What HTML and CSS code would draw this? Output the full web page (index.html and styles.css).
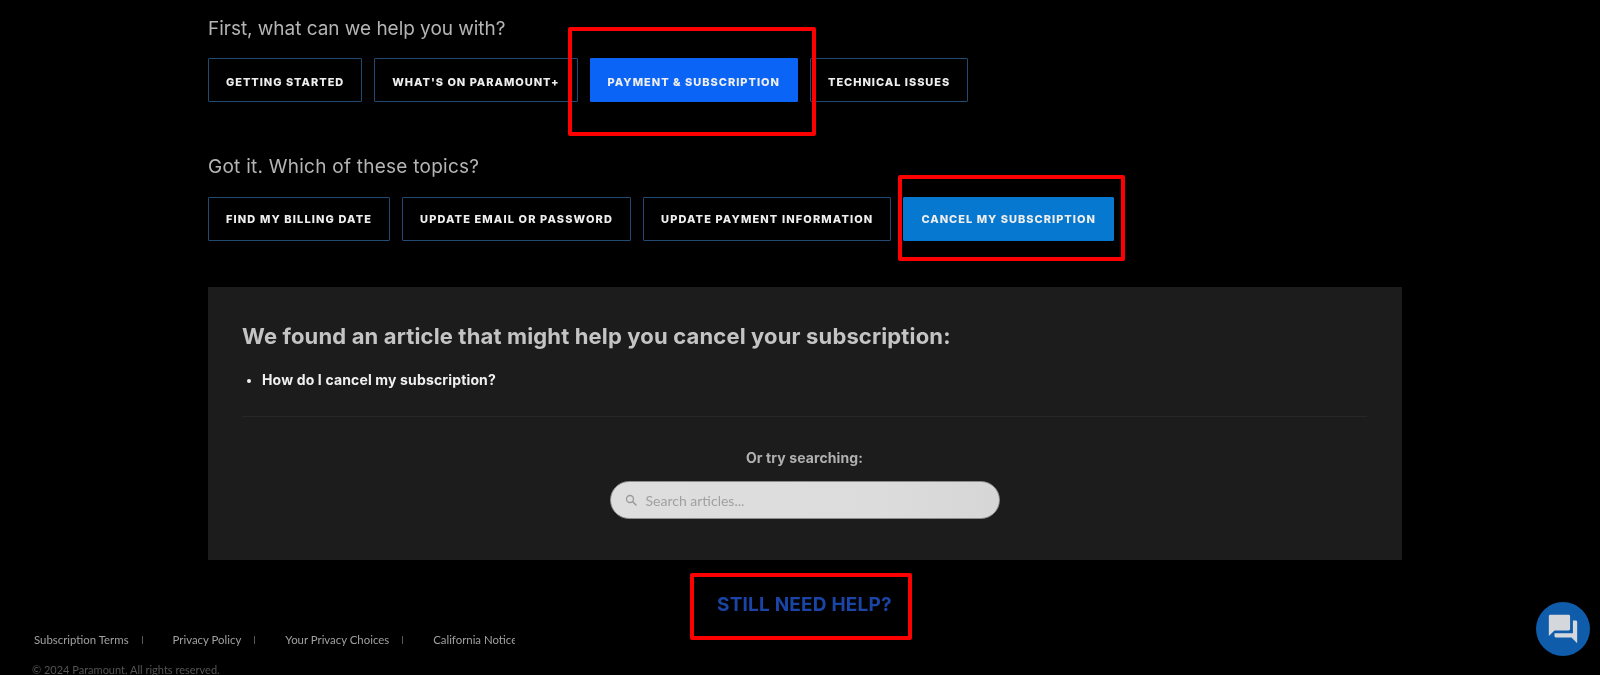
FILE: index.html
```html
<!DOCTYPE html>
<html lang="en">
<head>
<meta charset="utf-8">
<title>Paramount+ Help</title>
<link rel="stylesheet" href="styles.css">
</head>
<body>
<main class="help">
  <h2 class="prompt">First, what can we help you with?</h2>
  <div class="choices choices-first">
    <a class="choice">GETTING STARTED</a>
    <a class="choice">WHAT'S ON PARAMOUNT+</a>
    <a class="choice choice-active">PAYMENT &amp; SUBSCRIPTION</a>
    <a class="choice">TECHNICAL ISSUES</a>
  </div>
  <h2 class="prompt prompt-second">Got it. Which of these topics?</h2>
  <div class="choices choices-second">
    <a class="choice">FIND MY BILLING DATE</a>
    <a class="choice">UPDATE EMAIL OR PASSWORD</a>
    <a class="choice">UPDATE PAYMENT INFORMATION</a>
    <a class="choice choice-current">CANCEL MY SUBSCRIPTION</a>
  </div>
  <section class="panel">
    <h3 class="panel-title">We found an article that might help you cancel your subscription:</h3>
    <ul class="articles">
      <li>How do I cancel my subscription?</li>
    </ul>
    <hr class="rule">
    <p class="try">Or try searching:</p>
    <div class="search">
      <svg class="search-icon" viewBox="0 0 24 24" width="12" height="12" aria-hidden="true"><circle cx="10" cy="10" r="7" fill="none" stroke="currentColor" stroke-width="2.6"/><path d="M15 15l7 7" stroke="currentColor" stroke-width="3" stroke-linecap="round"/></svg>
      <span>Search articles...</span>
    </div>
  </section>
  <a class="still">STILL NEED HELP?</a>
</main>
<footer class="foot">
  <nav class="foot-links">
    <a>Subscription Terms</a><i></i>
    <a>Privacy Policy</a><i></i>
    <a>Your Privacy Choices</a><i></i>
    <a>California Notice</a>
  </nav>
  <p class="copy">© 2024 Paramount. All rights reserved.</p>
</footer>
<div class="mark mark-one"></div>
<div class="mark mark-two"></div>
<div class="mark mark-three"></div>
<button class="chat" aria-label="Chat">
  <svg viewBox="0 0 24 24" width="34" height="34" aria-hidden="true"><path fill="currentColor" d="M21 6h-2v9H6v2c0 .55.45 1 1 1h11l4 4V7c0-.55-.45-1-1-1zm-4 6V3c0-.55-.45-1-1-1H3c-.55 0-1 .45-1 1v14l4-4h10c.55 0 1-.45 1-1z"/></svg>
</button>
</body>
</html>
```

FILE: styles.css
```css
* { box-sizing: border-box; }
html, body { margin: 0; height: 675px; overflow: hidden; background: #000; }
body { position: relative; font-family: Inter, "Liberation Sans", sans-serif; color: #fff; filter: blur(0.45px); }

.help { width: 1194px; margin-left: 208px; padding-top: 15px; }

.prompt { margin: 0 0 15px; font-size: 19px; line-height: 28px; font-weight: 400; letter-spacing: -0.03px; color: #b4b4b4; }
.prompt-second { margin: 51px 0 16px; letter-spacing: 0.25px; }

.choices { display: flex; gap: 12px; }
.choice {
  height: 44px; padding: 0 17px; display: flex; align-items: center;
  border: 1px solid #234a72; border-radius: 1px; color: #eee;
  font-family: Inter, sans-serif; font-size: 11px; font-weight: 800; white-space: nowrap;
}
.choices-first .choice { padding-top: 3px; letter-spacing: 0.97px; }
.choices-first .choice-active { letter-spacing: 1px; }
.choices-second .choice { letter-spacing: 1.12px; }
.choices-second .choice-current { letter-spacing: 1px; }
.choice-active { background: #0a64f5; border-color: #0a64f5; }
.choice-current { background: #0678cf; border-color: #0678cf; }

.panel { margin-top: 46px; height: 273px; padding: 34px 35px 0 34px; background: #1c1c1c; }
.panel-title { margin: 0; font-size: 22px; line-height: 30px; font-weight: 700; letter-spacing: 0.15px; color: #c4c4c4; }
.articles { margin: 19px 0 0; padding: 0 0 0 20px; font-size: 14px; line-height: 20px; font-weight: 700; letter-spacing: 0.15px; color: #f0f0f0; }
.articles li::marker { font-size: 13px; }
.rule { margin: 26px 0 0; border: 0; height: 1px; background: #272727; }
.try { margin: 32px 0 14px; text-align: center; font-size: 14px; line-height: 18px; font-weight: 700; letter-spacing: 0.1px; color: #b0b0b0; }
.search {
  width: 390px; height: 38px; margin: 0 auto; padding: 0 14px; display: flex; align-items: center; gap: 9px;
  border: 1px solid #8c8c8c; border-radius: 19px; background: linear-gradient(90deg, #dedede, #dcdcdc 70%, #d6d6d6);
  font-family: Lato, sans-serif; font-size: 14px; color: #a0a0a0;
}
.search-icon { color: #999; }

.still { display: block; margin-top: 33px; padding-left: 509px; font-size: 19px; line-height: 24px; font-weight: 700; letter-spacing: 0.2px; color: #1a45a6; }

.foot { padding: 15px 0 0 34px; font-family: Lato, sans-serif; }
.foot-links { width: 481px; height: 16px; display: flex; align-items: center; overflow: hidden; font-size: 11.4px; line-height: 16px; color: #a0a0a0; white-space: nowrap; }
.foot-links i { flex: none; width: 1px; height: 8px; margin: 0 30px 0 13px; background: #555; }
.copy { margin: 14px 0 0 -2px; font-size: 11px; line-height: 16px; color: #555; white-space: nowrap; }

.mark { position: absolute; border: 4px solid #f00; border-radius: 2px; }
.mark-one { left: 568px; top: 27px; width: 248px; height: 109px; }
.mark-two { left: 898px; top: 175px; width: 227px; height: 86px; }
.mark-three { left: 690px; top: 573px; width: 222px; height: 67px; }

.chat {
  position: absolute; left: 1536px; top: 602px; width: 54px; height: 54px; padding: 0;
  display: flex; align-items: center; justify-content: center;
  border: 0; border-radius: 50%; background: #0f5cab; color: #d4d8dd;
}
```
